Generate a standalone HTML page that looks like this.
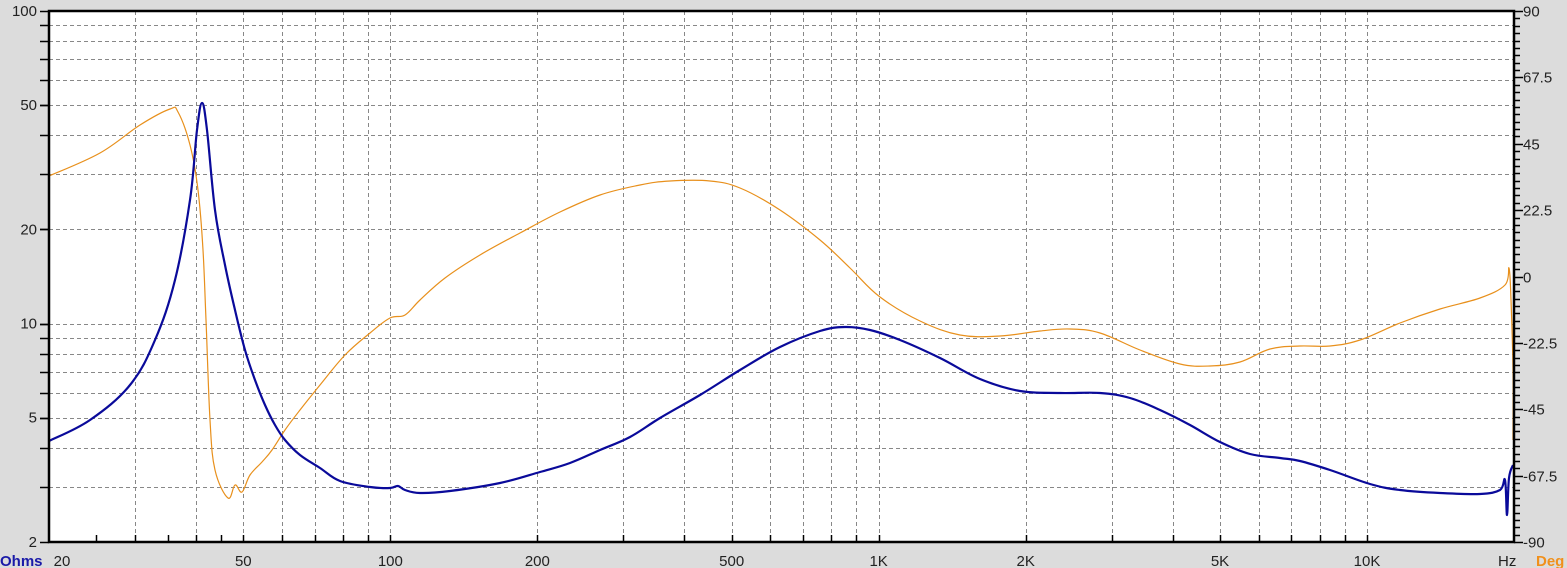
<!DOCTYPE html>
<html><head><meta charset="utf-8"><style>
html,body{margin:0;padding:0;background:#dcdcdc;width:1567px;height:568px;overflow:hidden}
svg{display:block}
text{font-family:"Liberation Sans",Arial,sans-serif;font-size:15px;fill:#222}
</style></head><body>
<svg id="s" width="1567" height="568" xmlns="http://www.w3.org/2000/svg">
<rect x="49" y="11" width="1465" height="531" fill="#fff"/>
<g id="grid" stroke="#888" stroke-width="1" stroke-dasharray="4,3"></g>
<g id="ticks" stroke="#000" stroke-width="1.5"></g>
<g id="labels"></g>
<path id="ph" fill="none" stroke="#e8901c" stroke-width="1.2"/>
<path id="im" fill="none" stroke="#0a0a9a" stroke-width="2.2"/>
<rect x="49" y="11" width="1465" height="531" fill="none" stroke="#000" stroke-width="2.5"/>
<text x="0" y="566" style="font-weight:bold;fill:#1a1aa8">Ohms</text>
<text x="1498" y="566">Hz</text>
<text x="1536" y="566" style="font-weight:bold;fill:#f0901c">Deg</text>
</svg>
<script>
var L=49,R=1514,T=11,B=542;
function fx(f){return L+Math.log10(f/20)*(R-L)/3;}
function oy(o){return T+(2-Math.log10(o))*(B-T)/Math.log10(50);}
var g=document.getElementById('grid'),tk=document.getElementById('ticks'),lb=document.getElementById('labels');
var ns='http://www.w3.org/2000/svg';
function el(p,n,a,t){var e=document.createElementNS(ns,n);for(var k in a)e.setAttribute(k,a[k]);if(t!==undefined)e.textContent=t;p.appendChild(e);return e;}
var fs=[];[10,100,1000,10000].forEach(function(d){for(var i=1;i<10;i++){var f=i*d;if(f>20&&f<20000)fs.push(f);}});
fs.forEach(function(f){var x=Math.round(fx(f))+0.5;el(g,'line',{x1:x,x2:x,y1:T,y2:B});el(tk,'line',{x1:x,x2:x,y1:B,y2:B-7});});
[25,35,45].forEach(function(f){var x=Math.round(fx(f))+0.5;el(tk,'line',{x1:x,x2:x,y1:B,y2:B-7});});
var os=[3,4,5,6,7,8,9,10,20,30,40,50,60,70,80,90];
os.forEach(function(o){var y=Math.round(oy(o))+0.5;el(g,'line',{x1:L,x2:R,y1:y,y2:y});el(tk,'line',{x1:L-9,x2:L,y1:y,y2:y});});
[[100,'100'],[50,'50'],[20,'20'],[10,'10'],[5,'5'],[2,'2']].forEach(function(a){var y=oy(a[0]);el(lb,'text',{x:37,y:y+5,'text-anchor':'end'},a[1]);el(tk,'line',{x1:L-9,x2:L,y1:Math.round(y)+0.5,y2:Math.round(y)+0.5});});
[[20,'20'],[50,'50'],[100,'100'],[200,'200'],[500,'500'],[1000,'1K'],[2000,'2K'],[5000,'5K'],[10000,'10K']].forEach(function(a){el(lb,'text',{x:fx(a[0])+(a[0]==20?13:0),y:566,'text-anchor':'middle'},a[1]);});
for(var d=-90;d<=90;d+=2.5){var y=Math.round(T+(90-d)/180*(B-T))+0.5;var big=(Math.abs(d/22.5-Math.round(d/22.5))<1e-6);el(tk,'line',{x1:R,x2:R+(big?9:6),y1:y,y2:y});if(big){var s=(Math.round(d*10)/10).toString();el(lb,'text',{x:R+9,y:y+5},s);}}
var im=[[49,441],[90,420],[130,385],[155,340],[175,280],[190,200],[197,130],[202,103],[207,130],[215,210],[225,265],[235,310],[245,350],[255,380],[265,405],[275,425],[285,440],[300,455],[320,468],[340,481],[370,487],[390,488],[398,486],[405,490],[420,493],[450,491],[500,483],[540,472],[570,463],[600,450],[630,437],[660,418],[700,395],[740,370],[780,347],[820,331],[845,327],[870,330],[900,340],[940,358],[980,379],[1020,391],[1060,393],[1100,393],[1130,398],[1160,410],[1190,425],[1220,442],[1250,454],[1280,458],[1300,461],[1330,470],[1370,484],[1400,490],[1440,493],[1480,494],[1500,490],[1505,480],[1507,515],[1509,478],[1513,465]];
var ph=[[49,176],[100,153],[140,125],[170,109],[178,112],[190,145],[198,190],[203,250],[206,320],[210,420],[215,470],[228,498],[235,485],[242,492],[250,475],[262,462],[272,450],[285,430],[300,410],[320,385],[345,355],[370,333],[390,318],[405,315],[420,300],[445,278],[480,255],[520,233],[560,212],[600,195],[640,185],[670,181],[710,181],[740,188],[780,210],[820,240],[850,268],[880,297],[920,321],[960,335],[1000,336],[1040,331],[1070,329],[1100,333],[1140,350],[1180,364],[1210,366],[1240,362],[1270,349],[1300,346],[1330,346],[1360,340],[1400,323],[1440,309],[1480,298],[1505,285],[1509,268],[1511,300],[1513,370],[1513,440]];
function cr(p){var d='M'+p[0][0]+','+p[0][1];for(var i=0;i<p.length-1;i++){var a=p[i-1]||p[i],b=p[i],c=p[i+1],e=p[i+2]||c;var t=0.18;d+=' C'+(b[0]+(c[0]-a[0])*t).toFixed(1)+','+(b[1]+(c[1]-a[1])*t).toFixed(1)+' '+(c[0]-(e[0]-b[0])*t).toFixed(1)+','+(c[1]-(e[1]-b[1])*t).toFixed(1)+' '+c[0]+','+c[1];}return d;}
document.getElementById('im').setAttribute('d',cr(im));
document.getElementById('ph').setAttribute('d',cr(ph));
</script>
</body></html>
